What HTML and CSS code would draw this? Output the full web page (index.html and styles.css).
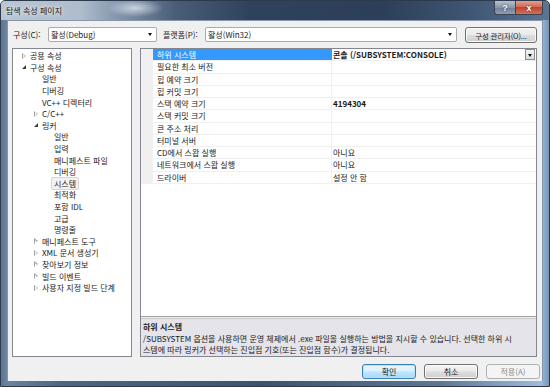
FILE: index.html
```html
<!DOCTYPE html>
<html lang="ko">
<head>
<meta charset="utf-8">
<title>탐색 속성 페이지</title>
<link rel="stylesheet" href="styles.css">
</head>
<body>
<div class="window">
  <div class="titlebar">
    <span class="title">탐색 속성 페이지</span>
    <div class="caption-btns">
      <div class="cbtn help">?</div>
      <div class="cbtn close">x</div>
    </div>
  </div>
  <div class="client">
    <div class="toolbar">
      <span class="lbl lbl-config">구성(C):</span>
      <div class="combo combo-config"><span>활성(Debug)</span><i class="drop"></i></div>
      <span class="lbl lbl-platform">플랫폼(P):</span>
      <div class="combo combo-platform"><span>활성(Win32)</span><i class="drop"></i></div>
      <div class="btn btn-mgr">구성 관리자(O)...</div>
    </div>

    <div class="panes">
      <div class="tree">
        <div class="ti l0"><span class="tw closed"></span><span class="tx">공용 속성</span></div>
        <div class="ti l0"><span class="tw open"></span><span class="tx">구성 속성</span></div>
        <div class="ti l1"><span class="tw"></span><span class="tx">일반</span></div>
        <div class="ti l1"><span class="tw"></span><span class="tx">디버깅</span></div>
        <div class="ti l1"><span class="tw"></span><span class="tx">VC++ 디렉터리</span></div>
        <div class="ti l1"><span class="tw closed"></span><span class="tx">C/C++</span></div>
        <div class="ti l1"><span class="tw open"></span><span class="tx">링커</span></div>
        <div class="ti l2"><span class="tw"></span><span class="tx">일반</span></div>
        <div class="ti l2"><span class="tw"></span><span class="tx">입력</span></div>
        <div class="ti l2"><span class="tw"></span><span class="tx">매니페스트 파일</span></div>
        <div class="ti l2"><span class="tw"></span><span class="tx">디버깅</span></div>
        <div class="ti l2"><span class="tw"></span><span class="tx sel">시스템</span></div>
        <div class="ti l2"><span class="tw"></span><span class="tx">최적화</span></div>
        <div class="ti l2"><span class="tw"></span><span class="tx">포함 IDL</span></div>
        <div class="ti l2"><span class="tw"></span><span class="tx">고급</span></div>
        <div class="ti l2"><span class="tw"></span><span class="tx">명령줄</span></div>
        <div class="ti l1"><span class="tw closed"></span><span class="tx">매니페스트 도구</span></div>
        <div class="ti l1"><span class="tw closed"></span><span class="tx">XML 문서 생성기</span></div>
        <div class="ti l1"><span class="tw closed"></span><span class="tx">찾아보기 정보</span></div>
        <div class="ti l1"><span class="tw closed"></span><span class="tx">빌드 이벤트</span></div>
        <div class="ti l1"><span class="tw closed"></span><span class="tx">사용자 지정 빌드 단계</span></div>
      </div>

      <div class="props">
        <div class="grid">
          <div class="row selected"><span class="strip"></span><span class="name">하위 시스템</span><span class="val bold">콘솔 (/SUBSYSTEM:CONSOLE)<i class="valdrop"></i></span></div>
          <div class="row"><span class="strip"></span><span class="name">필요한 최소 버전</span><span class="val"></span></div>
          <div class="row"><span class="strip"></span><span class="name">힙 예약 크기</span><span class="val"></span></div>
          <div class="row"><span class="strip"></span><span class="name">힙 커밋 크기</span><span class="val"></span></div>
          <div class="row"><span class="strip"></span><span class="name">스택 예약 크기</span><span class="val bold">4194304</span></div>
          <div class="row"><span class="strip"></span><span class="name">스택 커밋 크기</span><span class="val"></span></div>
          <div class="row"><span class="strip"></span><span class="name">큰 주소 처리</span><span class="val"></span></div>
          <div class="row"><span class="strip"></span><span class="name">터미널 서버</span><span class="val"></span></div>
          <div class="row"><span class="strip"></span><span class="name">CD에서 스왑 실행</span><span class="val">아니요</span></div>
          <div class="row"><span class="strip"></span><span class="name">네트워크에서 스왑 실행</span><span class="val">아니요</span></div>
          <div class="row"><span class="strip"></span><span class="name">드라이버</span><span class="val">설정 안 함</span></div>
        </div>
        <div class="desc">
          <div class="desc-title">하위 시스템</div>
          <div class="desc-line">/SUBSYSTEM 옵션을 사용하면 운영 체제에서 .exe 파일을 실행하는 방법을 지시할 수 있습니다. 선택한 하위 시</div>
          <div class="desc-line">스템에 따라 링커가 선택하는 진입점 기호(또는 진입점 함수)가 결정됩니다.</div>
        </div>
      </div>
    </div>

    <div class="footer">
      <div class="btn btn-ok">확인</div>
      <div class="btn">취소</div>
      <div class="btn disabled">적용(A)</div>
    </div>
  </div>
</div>
</body>
</html>
```

FILE: styles.css
```css
* { box-sizing: border-box; }

html, body {
  margin: 0;
  padding: 0;
}

body {
  width: 550px;
  height: 387px;
  overflow: hidden;
  font-family: "Noto Sans CJK KR", "Noto Sans", sans-serif;
  font-size: 8px;
  color: #1a1a1a;
}

.window {
  width: 550px;
  height: 387px;
  display: flex;
  flex-direction: column;
  background:
    linear-gradient(90deg, #5d7391 0px, #6c84a3 6px, #4e6686 60px, #3c5373 260px, #5b7899 440px, #9dbcdc 540px, #6f8fb4 549px);
  border: 1px solid #2c3a4c;
  border-radius: 5px 5px 0 0;
}

/* ---------- title bar ---------- */
.titlebar {
  height: 19px;
  display: flex;
  align-items: flex-start;
  background:
    radial-gradient(ellipse 28px 9px at 134px 7px, rgba(215,225,236,.85), rgba(215,225,236,0)),
    linear-gradient(90deg, #bac6d3 0px, #aebccc 80px, #8c9db2 110px, #4a5d77 175px, #2f425c 250px, #2d3f58 380px, #3f5674 470px, #5b7593 548px);
  border-radius: 4px 4px 0 0;
}

.title {
  margin-left: 5px;
  margin-top: 4px;
  line-height: 11px;
  font-size: 8px;
  color: #141414;
  text-shadow: 0 0 3px rgba(255,255,255,.95), 0 0 6px rgba(255,255,255,.7);
}

.caption-btns {
  margin-left: auto;
  margin-right: 6px;
  display: flex;
}

.cbtn {
  height: 14px;
  border: 1px solid #3a4453;
  border-top: none;
  color: #fff;
  font-family: "Liberation Sans", sans-serif;
  font-weight: bold;
  display: flex;
  align-items: center;
  justify-content: center;
  text-shadow: 0 0 2px #333;
}

.cbtn.help {
  width: 21px;
  font-size: 9px;
  border-radius: 0 0 0 3px;
  border-right: none;
  background: linear-gradient(#b6c2d0, #8796aa 50%, #6c7d94 51%, #8ea0b6);
}

.cbtn.close {
  width: 28px;
  font-size: 9px;
  border-radius: 0 0 3px 0;
  background: linear-gradient(#e2a090, #d06a55 45%, #c2442b 50%, #d0735b);
}

/* ---------- client ---------- */
.client {
  margin: 0 6px 0 6px;
  height: 361px;
  background: #f0f0f0;
  border: 1px solid #8595aa;
  border-bottom: none;
  padding: 6px 5px 0 4px;
  display: flex;
  flex-direction: column;
}

.toolbar {
  height: 16px;
  display: flex;
  align-items: flex-start;
}

.lbl {
  line-height: 15px;
  white-space: nowrap;
}

.lbl-config { width: 36px; padding-left: 1px; }
.lbl-platform { width: 42px; margin-left: 6px; }

.combo {
  height: 15px;
  background: #fff;
  border: 1px solid #a5acb5;
  border-radius: 2px;
  display: flex;
  align-items: center;
  padding-left: 2px;
}

.combo-config { width: 109px; }
.combo-platform { width: 252px; }

.drop {
  margin-left: auto;
  margin-right: 4px;
  width: 0;
  height: 0;
  border-left: 2.5px solid transparent;
  border-right: 2.5px solid transparent;
  border-top: 3px solid #111;
}

.btn {
  height: 16px;
  border: 1px solid #707070;
  border-radius: 3px;
  background: linear-gradient(#f2f2f2 0%, #ebebeb 48%, #dddddd 52%, #cfcfcf 100%);
  box-shadow: inset 0 0 0 1px rgba(255,255,255,.8);
  display: flex;
  align-items: center;
  justify-content: center;
  white-space: nowrap;
}

.btn-mgr {
  width: 72px;
  margin-left: 8px;
  font-size: 7.4px;
  letter-spacing: -0.1px;
  overflow: visible;
}

/* ---------- panes ---------- */
.panes {
  margin-top: 5px;
  height: 309px;
  display: flex;
  gap: 8px;
}

.tree {
  width: 120px;
  background: #fff;
  border: 1px solid #828790;
  padding-top: 1px;
}

.ti {
  height: 11.6px;
  display: flex;
  align-items: center;
  white-space: nowrap;
}

.ti.l0 { padding-left: 8px; }
.ti.l1 { padding-left: 20px; }
.ti.l2 { padding-left: 32px; }

.tw {
  width: 9px;
  height: 8px;
  flex: none;
  position: relative;
}

.tw.closed::before {
  content: "";
  position: absolute;
  left: 1px;
  top: 1px;
  width: 0;
  height: 0;
  border-top: 3.5px solid transparent;
  border-bottom: 3.5px solid transparent;
  border-left: 4px solid #a0a0a0;
}

.tw.closed::after {
  content: "";
  position: absolute;
  left: 2px;
  top: 2.5px;
  width: 0;
  height: 0;
  border-top: 2px solid transparent;
  border-bottom: 2px solid transparent;
  border-left: 2.2px solid #fff;
}

.tw.open::before {
  content: "";
  position: absolute;
  left: 1px;
  top: 2px;
  width: 0;
  height: 0;
  border-left: 4px solid transparent;
  border-bottom: 4px solid #3c3c3c;
}

.tx {
  line-height: 11px;
}

.tx.sel {
  margin-left: -3px;
  padding: 0 2px;
  background: #f2f2f2;
  border: 1px solid #d6d6d6;
  border-radius: 2px;
}

.props {
  width: 397px;
  border: 1px solid #828790;
  display: flex;
  flex-direction: column;
}

.grid {
  height: 268px;
  background: #fff;
  border-bottom: 1px solid #a0a0a0;
}

.row {
  height: 12.27px;
  display: flex;
  border-bottom: 1px solid #f0f0f0;
}

.strip {
  width: 12px;
  flex: none;
  background: #f0f0f0;
}

.name {
  width: 179px;
  flex: none;
  padding-left: 4px;
  line-height: 11px;
  white-space: nowrap;
  border-right: 1px solid #f0f0f0;
}

.val {
  flex: 1;
  padding-left: 1px;
  line-height: 11px;
  white-space: nowrap;
  display: flex;
  align-items: flex-start;
}

.val.bold { font-weight: bold; }

.row.selected .name {
  background: #3399ff;
  color: #fff;
}

.row.selected .val {
  border-left: 1px solid #3399ff;
  margin-left: -1px;
}

.valdrop {
  margin-left: auto;
  margin-right: 1px;
  width: 10px;
  height: 11px;
  border: 1px solid #8c8c8c;
  background: linear-gradient(#f5f5f5, #dcdcdc);
  position: relative;
}

.valdrop::after {
  content: "";
  position: absolute;
  left: 2px;
  top: 3.5px;
  border-left: 2.5px solid transparent;
  border-right: 2.5px solid transparent;
  border-top: 3px solid #111;
}

.desc {
  flex: 1;
  margin-top: 1px;
  background: #e4e4ea;
  border-top: 1px solid #c9c9cf;
  padding: 2px 0 0 2px;
  line-height: 11px;
  white-space: nowrap;
  overflow: hidden;
}

.desc-title {
  font-weight: bold;
  margin-bottom: 1px;
}

/* ---------- footer ---------- */
.footer {
  margin-top: 7px;
  height: 15px;
  display: flex;
  justify-content: flex-end;
  gap: 8px;
  margin-right: -3px;
}

.footer .btn {
  width: 54px;
  height: 15px;
}

.btn-ok {
  border-color: #3c7fb1;
  box-shadow: inset 0 0 0 1px #b7e3f8;
  background: linear-gradient(#eaf6fd 0%, #d9f0fc 48%, #bee6fd 52%, #a7d9f5 100%);
}

.btn.disabled {
  border-color: #adb2b5;
  background: #f4f4f4;
  color: #8c8c8c;
  box-shadow: none;
}
```
